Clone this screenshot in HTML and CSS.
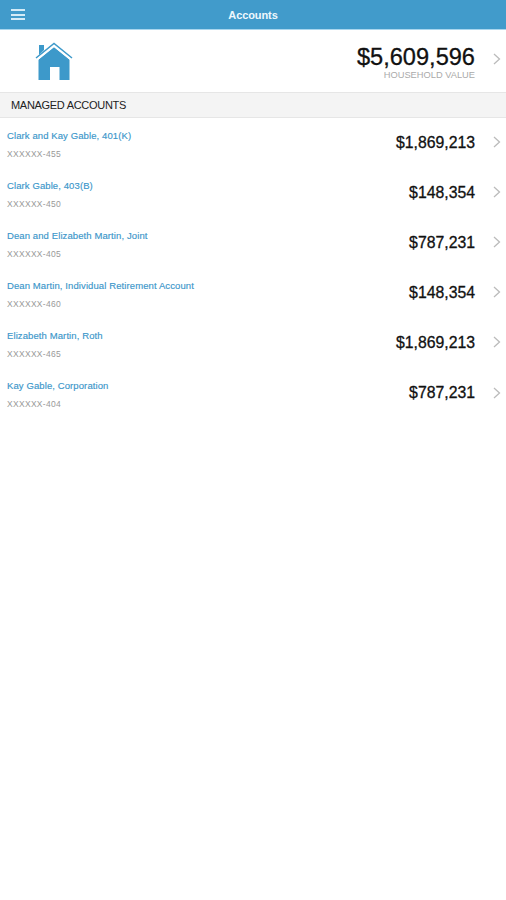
FILE: index.html
```html
<!DOCTYPE html>
<html lang="en">
<head>
    <meta charset="UTF-8">
    <meta name="viewport" content="width=device-width, initial-scale=1.0">
    <title>Accounts</title>
    <link rel="stylesheet" href="styles.css">
</head>
<body>
    <!-- Header -->
    <header class="header">
        <button class="menu-button" aria-label="Menu">
            <span></span>
            <span></span>
            <span></span>
        </button>
        <h1>Accounts</h1>
    </header>

    <!-- Household total -->
    <section class="household">
        <svg class="house-icon" width="38" height="40" viewBox="0 0 38 40">
            <path d="M4 4h5v5l-5 5z"/>
            <path d="M3.500 18.500L19 6l15.500 12.500V39H24.500V26h-9.500v13H3.500z"/>
            <path class="roof" d="M1 17L19 2.500 37 17"/>
            <path class="roof-gap" d="M2.500 18.300L19 5.100l16.500 13.200"/>
        </svg>
        <div class="household-total">
            <div class="household-value">$5,609,596</div>
            <div class="household-label">HOUSEHOLD VALUE</div>
        </div>
        <svg class="chevron" width="8" height="12" viewBox="0 0 8 12"><path d="M1 1l5.500 5L1 11"/></svg>
    </section>

    <!-- Account list -->
    <h2>MANAGED ACCOUNTS</h2>
    <ul class="account-list">
        <li>
            <div class="account-info">
                <a>Clark and Kay Gable, 401(K)</a>
                <p>XXXXXX-455</p>
            </div>
            <span class="amount">$1,869,213</span>
            <svg class="chevron" width="8" height="12" viewBox="0 0 8 12"><path d="M1 1l5.500 5L1 11"/></svg>
        </li>
        <li>
            <div class="account-info">
                <a>Clark Gable, 403(B)</a>
                <p>XXXXXX-450</p>
            </div>
            <span class="amount">$148,354</span>
            <svg class="chevron" width="8" height="12" viewBox="0 0 8 12"><path d="M1 1l5.500 5L1 11"/></svg>
        </li>
        <li>
            <div class="account-info">
                <a>Dean and Elizabeth Martin, Joint</a>
                <p>XXXXXX-405</p>
            </div>
            <span class="amount">$787,231</span>
            <svg class="chevron" width="8" height="12" viewBox="0 0 8 12"><path d="M1 1l5.500 5L1 11"/></svg>
        </li>
        <li>
            <div class="account-info">
                <a>Dean Martin, Individual Retirement Account</a>
                <p>XXXXXX-460</p>
            </div>
            <span class="amount">$148,354</span>
            <svg class="chevron" width="8" height="12" viewBox="0 0 8 12"><path d="M1 1l5.500 5L1 11"/></svg>
        </li>
        <li>
            <div class="account-info">
                <a>Elizabeth Martin, Roth</a>
                <p>XXXXXX-465</p>
            </div>
            <span class="amount">$1,869,213</span>
            <svg class="chevron" width="8" height="12" viewBox="0 0 8 12"><path d="M1 1l5.500 5L1 11"/></svg>
        </li>
        <li>
            <div class="account-info">
                <a>Kay Gable, Corporation</a>
                <p>XXXXXX-404</p>
            </div>
            <span class="amount">$787,231</span>
            <svg class="chevron" width="8" height="12" viewBox="0 0 8 12"><path d="M1 1l5.500 5L1 11"/></svg>
        </li>
    </ul>
</body>
</html>
```
FILE: styles.css
```css
* {
    margin: 0;
    padding: 0;
    box-sizing: border-box;
}

body {
    font-family: 'Helvetica Neue', Helvetica, 'Liberation Sans', Arial, sans-serif;
    min-height: 100vh;
    background: #fff;
    color: #111;
}

/* Header Styles */
.header {
    display: grid;
    grid-template-columns: 36px 1fr 36px;
    align-items: center;
    height: 30px;
    background: #419bcb;
    border-bottom: 1px solid #a9d6ee;
}

.menu-button {
    display: flex;
    flex-direction: column;
    gap: 2.5px;
    width: 14px;
    margin-left: 11px;
    border: none;
    background: none;
}

.menu-button span {
    height: 2px;
    background: #d3ebf7;
}

h1 {
    color: #eef8fd;
    font-size: 11px;
    font-weight: 600;
    line-height: 14px;
    letter-spacing: -0.1px;
    text-align: center;
}

/* Household Styles */
.household {
    display: flex;
    align-items: center;
    height: 62px;
    padding: 0 5px 0 35px;
}

.house-icon {
    fill: #3d99ca;
}

.house-icon .roof,
.house-icon .roof-gap {
    fill: none;
    stroke: #3d99ca;
    stroke-width: 1.5;
}

.house-icon .roof-gap {
    stroke: #fff;
}

.household-total {
    margin-left: auto;
    padding-top: 4px;
    text-align: right;
}

.household-value {
    font-size: 23.6px;
    line-height: 25px;
    -webkit-text-stroke: 0.3px #111;
}

.household-label {
    color: #aaa;
    font-size: 9.3px;
    line-height: 11px;
}

.chevron {
    flex: none;
    margin-left: 18px;
    fill: none;
    stroke: #bbb;
    stroke-width: 1.3;
}

.household .chevron {
    margin-bottom: 5px;
}

/* Account List Styles */
h2 {
    height: 26px;
    padding-left: 11px;
    background: #f4f4f4;
    border-top: 1px solid #e6e6e6;
    border-bottom: 1px solid #e6e6e6;
    color: #222;
    font-size: 11px;
    font-weight: normal;
    letter-spacing: -0.3px;
    line-height: 24px;
}

.account-list {
    list-style: none;
}

.account-list li {
    display: flex;
    align-items: center;
    height: 50.1px;
    padding: 0 5px 2px 7px;
}

.account-list .amount {
    padding-top: 1px;
}

.account-info {
    padding-top: 5.5px;
}

.account-info a {
    display: block;
    color: #3b96ca;
    font-size: 9.5px;
    letter-spacing: 0.1px;
    line-height: 12px;
    -webkit-text-stroke: 0.15px #3b96ca;
}

.account-info p {
    margin-top: 7px;
    color: #999;
    font-size: 8.5px;
    letter-spacing: 0.3px;
    line-height: 11px;
}

.amount {
    margin-left: auto;
    font-size: 15.8px;
    -webkit-text-stroke: 0.3px #111;
}
```
